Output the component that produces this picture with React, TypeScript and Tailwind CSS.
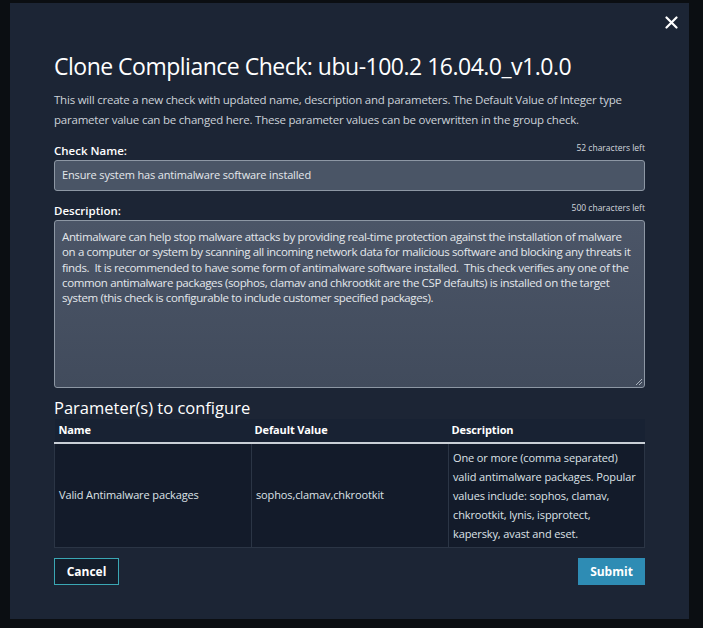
const font = { fontFamily: '"Open Sans", "Noto Sans", sans-serif' }

function App() {
  return (
    <div className="min-h-screen w-full bg-[#0b0e12] p-[3px] pl-[10px] pr-[14px] pb-[9px]" style={font}>
      <div className="relative bg-[#1c2535] px-[44px] pt-[48px] pb-[34px] text-[#d3d8de]">
        {/* close */}
        <button className="absolute right-[11px] top-[13px] text-white">
          <svg width="13" height="13" viewBox="0 0 13 13">
            <path d="M1.5 1.5 L11.5 11.5 M11.5 1.5 L1.5 11.5" stroke="white" strokeWidth="2.2" strokeLinecap="round" />
          </svg>
        </button>

        <h1 className="text-[23px] leading-[30px] text-white tracking-[-0.5px]">
          Clone Compliance Check: ubu-100.2 16.04.0_v1.0.0
        </h1>
        <p className="mt-[9px] text-[11.5px] leading-[20px] tracking-[-0.22px] text-[#ccd2d9]">
          This will create a new check with updated name, description and parameters. The Default Value of Integer type
          parameter value can be changed here. These parameter values can be overwritten in the group check.
        </p>

        {/* check name */}
        <div className="mt-[11px] flex items-end justify-between">
          <label className="text-[11.5px] font-semibold text-white leading-[18px]">Check Name:</label>
          <span className="text-[8.5px] text-[#d3d8de] leading-[14px] mb-[5px]">52 characters left</span>
        </div>
        <div className="h-[31px] rounded-[3px] border border-[#8d97a4] bg-[#4a5566] px-[7px] flex items-center text-[11px] tracking-[-0.15px] text-[#e4e8ec]">
          Ensure system has antimalware software installed
        </div>

        {/* description */}
        <div className="mt-[10px] flex items-end justify-between">
          <label className="text-[11.5px] font-semibold text-white leading-[18px]">Description:</label>
          <span className="text-[8.5px] text-[#d3d8de] leading-[14px] mb-[5px]">500 characters left</span>
        </div>
        <div className="relative h-[168px] overflow-hidden whitespace-nowrap rounded-[3px] border border-[#8d97a4] bg-gradient-to-b from-[#4b5567] to-[#414b5c] px-[7px] pt-[8px] text-[11.5px] leading-[15.3px] tracking-[-0.36px] text-[#e4e8ec]">
          Antimalware can help stop malware attacks by providing real-time protection against the installation of malware
          <br />
          on a computer or system by scanning all incoming network data for malicious software and blocking any threats it
          <br />
          finds.&nbsp; It is recommended to have some form of antimalware software installed.&nbsp; This check verifies any one of the
          <br />
          common antimalware packages (sophos, clamav and chkrootkit are the CSP defaults) is installed on the target
          <br />
          system (this check is configurable to include customer specified packages).
          <svg className="absolute right-[1px] bottom-[1px]" width="8" height="8" viewBox="0 0 8 8">
            <path d="M7 1 L1 7 M7 4 L4 7" stroke="#aab2bd" strokeWidth="1" />
          </svg>
        </div>

        {/* parameters */}
        <h2 className="mt-[9px] text-[16.5px] leading-[22px] text-white">Parameter(s) to configure</h2>
        <table className="w-full border-collapse text-[11px] tracking-[-0.12px]">
          <thead>
            <tr className="bg-[#182233] border-b-2 border-[#c9cfd6]">
              <th className="w-[197px] h-[24px] px-[4px] text-left font-bold text-white">Name</th>
              <th className="w-[197px] px-[3px] text-left font-bold text-white">Default Value</th>
              <th className="px-[3px] text-left font-bold text-white">Description</th>
            </tr>
          </thead>
          <tbody>
            <tr className="bg-[#131b2a]">
              <td className="border border-[#2b3545] px-[4px] text-[#dde2e7]">Valid Antimalware packages</td>
              <td className="border border-[#2b3545] px-[4px] text-[#dde2e7]">sophos,clamav,chkrootkit</td>
              <td className="border border-[#2b3545] px-[4px] py-[4px] leading-[19px] text-[#dde2e7]">
                One or more (comma separated) valid antimalware packages. Popular values include: sophos, clamav,
                chkrootkit, lynis, ispprotect, kapersky, avast and eset.
              </td>
            </tr>
          </tbody>
        </table>

        {/* actions */}
        <div className="mt-[10px] flex justify-between">
          <button className="h-[27px] w-[65px] border border-[#3aa7b4] bg-[#141d2b] text-[12px] font-bold text-white">
            Cancel
          </button>
          <button className="h-[27px] w-[67px] bg-[#2e8cb4] text-[12px] font-bold text-white">
            Submit
          </button>
        </div>
      </div>
    </div>
  )
}

export default App
